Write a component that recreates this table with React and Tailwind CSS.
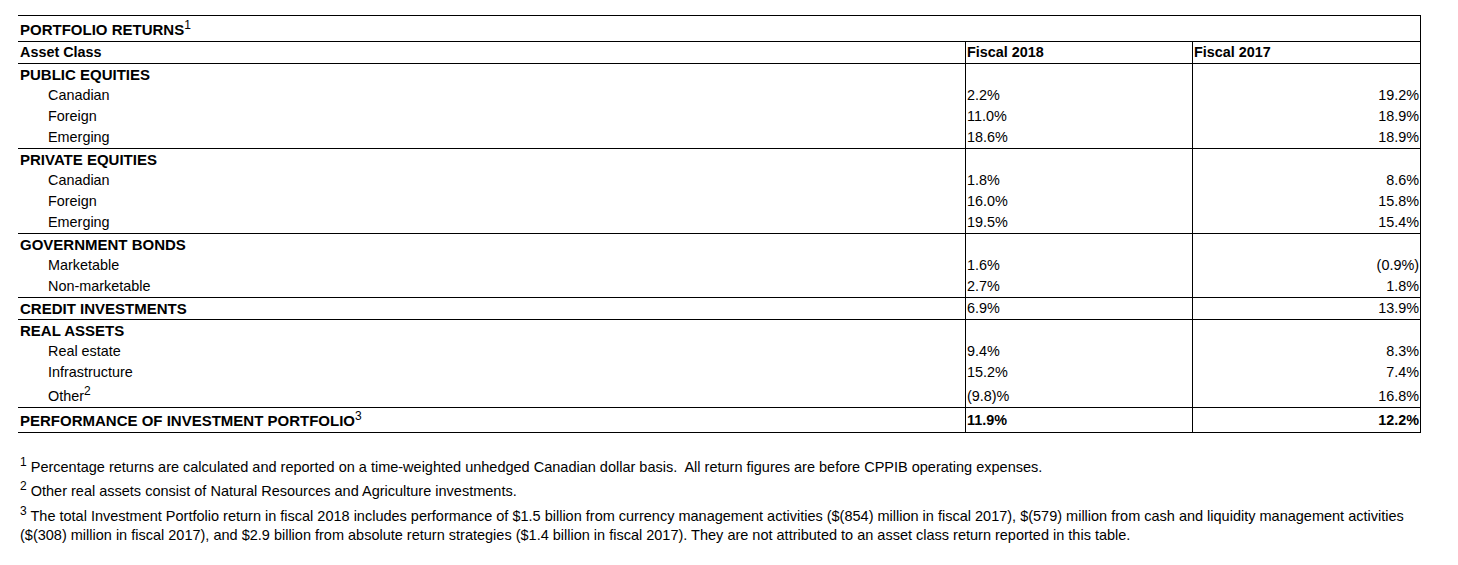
const groups = [
  {
    title: "PUBLIC EQUITIES",
    rows: [
      ["Canadian", "2.2%", "19.2%"],
      ["Foreign", "11.0%", "18.9%"],
      ["Emerging", "18.6%", "18.9%"],
    ],
  },
  {
    title: "PRIVATE EQUITIES",
    rows: [
      ["Canadian", "1.8%", "8.6%"],
      ["Foreign", "16.0%", "15.8%"],
      ["Emerging", "19.5%", "15.4%"],
    ],
  },
  {
    title: "GOVERNMENT BONDS",
    rows: [
      ["Marketable", "1.6%", "(0.9%)"],
      ["Non-marketable", "2.7%", "1.8%"],
    ],
  },
];

const Sup = ({ children }) => (
  <span className="relative -top-[6px] text-[12px] leading-none font-normal">{children}</span>
);

const Caps = ({ children }) => <span className="font-bold text-[15px]">{children}</span>;

const Row = ({ label, a, b, bold, indent, h = "h-[21px]", pad = "" }) => (
  <div className={`grid grid-cols-[947px_227px_228px] ${h}`}>
    <div className={`${indent ? "pl-[30px]" : "pl-[2px]"} ${pad}`}>{label}</div>
    <div className={`border-l border-black pl-[1px] ${bold ? "font-bold" : ""} ${pad}`}>{a}</div>
    <div className={`border-l border-black text-right pr-[1px] ${bold ? "font-bold" : ""} ${pad}`}>{b}</div>
  </div>
);

export default function App() {
  return (
    <div className="min-h-screen bg-white text-black font-['Liberation_Sans',Arial,sans-serif] text-[14.4px] leading-[21px]">
      <div className="pt-[15px] pl-[18px]">
        <div className="w-[1403px] border-t border-r border-black">
          {/* title */}
          <div className="h-[26px] pt-[3px] pl-[2px] border-b border-black">
            <Caps>PORTFOLIO RETURNS<Sup>1</Sup></Caps>
          </div>
          <div className="border-b border-black">
            <Row label={<span className="font-bold">Asset Class</span>} a="Fiscal 2018" b={<div className="text-left pl-[1px]">Fiscal 2017</div>} bold />
          </div>

          {groups.map((g) => (
            <div key={g.title} className="border-b border-black">
              <Row label={<Caps>{g.title}</Caps>} />
              {g.rows.map((r) => (
                <Row key={r[0]} label={r[0]} a={r[1]} b={r[2]} indent />
              ))}
            </div>
          ))}

          <div className="border-b border-black">
            <Row label={<Caps>CREDIT INVESTMENTS</Caps>} a="6.9%" b="13.9%" />
          </div>

          <div className="border-b border-black">
            <Row label={<Caps>REAL ASSETS</Caps>} />
            <Row label="Real estate" a="9.4%" b="8.3%" indent />
            <Row label="Infrastructure" a="15.2%" b="7.4%" indent />
            <Row label={<>Other<Sup>2</Sup></>} a="(9.8)%" b="16.8%" indent h="h-[24px]" pad="pt-[3px]" />
          </div>

          <div className="border-b border-black">
            <Row
              label={<Caps>PERFORMANCE OF INVESTMENT PORTFOLIO<Sup>3</Sup></Caps>}
              a="11.9%"
              b="12.2%"
              bold
              h="h-[24px]"
              pad="pt-[2px]"
            />
          </div>
        </div>

        {/* footnotes */}
        <div className="mt-[22px] pl-[2px] text-[14.5px]">
          <p className="leading-[24px]">
            <Sup>1</Sup> Percentage returns are calculated and reported on a time-weighted unhedged Canadian dollar basis.&nbsp; All return figures are before CPPIB operating expenses.
          </p>
          <p className="leading-[24px]">
            <Sup>2</Sup> Other real assets consist of Natural Resources and Agriculture investments.
          </p>
          <p className="leading-[19px] mt-[4px]">
            <Sup>3</Sup> The total Investment Portfolio return in fiscal 2018 includes performance of $1.5 billion from currency management activities ($(854) million in fiscal 2017), $(579) million from cash and liquidity management activities
            <br />
            ($(308) million in fiscal 2017), and $2.9 billion from absolute return strategies ($1.4 billion in fiscal 2017). They are not attributed to an asset class return reported in this table.
          </p>
        </div>
      </div>
    </div>
  );
}
